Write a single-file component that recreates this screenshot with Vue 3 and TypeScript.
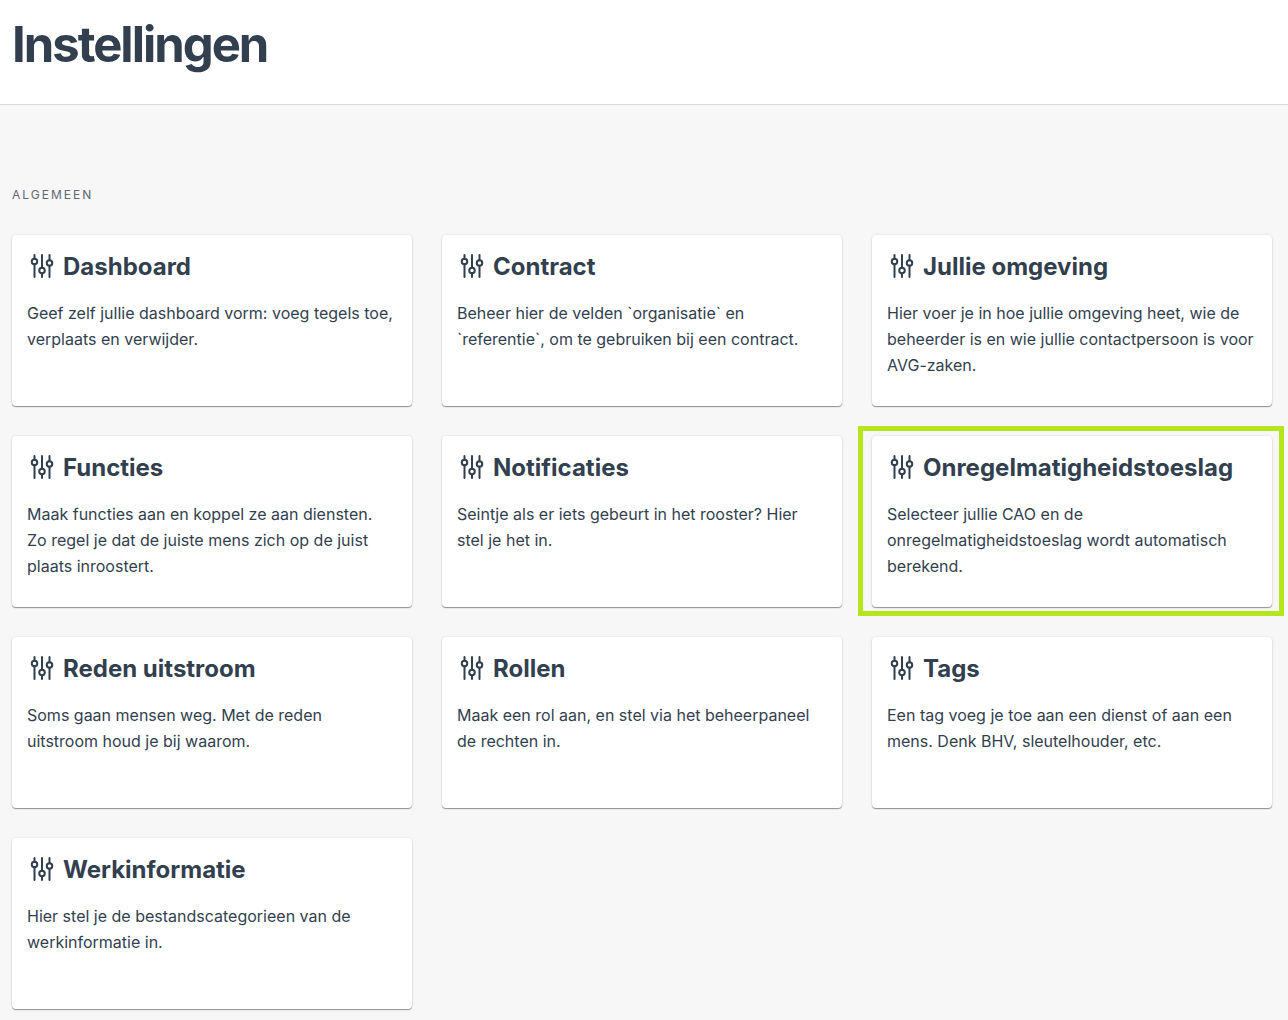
<script setup lang="ts">
interface SettingCard {
  title: string
  slug: string
  text: string
  highlighted?: boolean
}

const cards: SettingCard[] = [
  { title: 'Dashboard', slug: 'dashboard', text: 'Geef zelf jullie dashboard vorm: voeg tegels toe, verplaats en verwijder.' },
  { title: 'Contract', slug: 'contract', text: 'Beheer hier de velden `organisatie` en `referentie`, om te gebruiken bij een contract.' },
  { title: 'Jullie omgeving', slug: 'omgeving', text: 'Hier voer je in hoe jullie omgeving heet, wie de beheerder is en wie jullie contactpersoon is voor AVG-zaken.' },
  { title: 'Functies', slug: 'functies', text: 'Maak functies aan en koppel ze aan diensten. Zo regel je dat de juiste mens zich op de juist plaats inroostert.' },
  { title: 'Notificaties', slug: 'notificaties', text: 'Seintje als er iets gebeurt in het rooster? Hier stel je het in.' },
  { title: 'Onregelmatigheidstoeslag', slug: 'toeslag', text: 'Selecteer jullie CAO en de onregelmatigheidstoeslag wordt automatisch berekend.', highlighted: true },
  { title: 'Reden uitstroom', slug: 'uitstroom', text: 'Soms gaan mensen weg. Met de reden uitstroom houd je bij waarom.' },
  { title: 'Rollen', slug: 'rollen', text: 'Maak een rol aan, en stel via het beheerpaneel de rechten in.' },
  { title: 'Tags', slug: 'tags', text: 'Een tag voeg je toe aan een dienst of aan een mens. Denk BHV, sleutelhouder, etc.' },
  { title: 'Werkinformatie', slug: 'werkinformatie', text: 'Hier stel je de bestandscategorieen van de werkinformatie in.' },
]
</script>

<template>
  <div class="page">
    <header class="page-header">
      <h1>Instellingen</h1>
    </header>
    <main class="content">
      <h2 class="section-title">Algemeen</h2>
      <div class="grid">
        <a
          v-for="card in cards"
          :key="card.slug"
          class="card"
          :class="{ highlighted: card.highlighted }"
          :href="`#${card.slug}`"
        >
          <h3 class="card-title">
            <svg class="icon" viewBox="0 0 24 24" aria-hidden="true">
              <path d="M4.500 1v3.750M4.500 10.250v12.750M12 1v12.750M12 19.250v3.750M19.500 1v5.250M19.500 11.750v11.250" />
              <circle cx="4.500" cy="7.500" r="2.750" />
              <circle cx="12" cy="16.500" r="2.750" />
              <circle cx="19.500" cy="9" r="2.750" />
            </svg>
            <span>{{ card.title }}</span>
          </h3>
          <p class="card-text">{{ card.text }}</p>
        </a>
      </div>
    </main>
  </div>
</template>

<style>
body {
  margin: 0;
  background: #f7f7f7;
}
</style>

<style scoped>
.page {
  min-height: 100vh;
  color: #323f4f;
  font-family: Inter, "Liberation Sans", sans-serif;
}

.page-header {
  padding: 15px 12px 29px;
  background: #fff;
  border-bottom: 1px solid #d8d8d8;
}

h1 {
  margin: 0;
  font-size: 49px;
  line-height: 60px;
  font-weight: 700;
  letter-spacing: -2px;
}

.content {
  padding: 80px 16px 10px 12px;
}

.section-title {
  margin: 0 0 30px;
  font-size: 12px;
  line-height: 20px;
  font-weight: 400;
  letter-spacing: 2px;
  text-transform: uppercase;
  color: #5f6670;
}

.grid {
  display: grid;
  grid-template-columns: repeat(3, minmax(0, 1fr));
  gap: 30px;
}

.card {
  position: relative;
  box-sizing: border-box;
  min-height: 171px;
  padding: 15px 18px 15px 15px;
  border-radius: 4px;
  background: #fff;
  box-shadow: 0 1px 1px rgba(0, 0, 0, 0.4), 0 0 3px rgba(0, 0, 0, 0.1);
  color: inherit;
  text-decoration: none;
}

.card.highlighted::after {
  content: "";
  position: absolute;
  inset: -10px -12px -9px -14px;
  border: 5px solid #b4e61d;
  pointer-events: none;
}

.card-title {
  display: flex;
  align-items: center;
  gap: 9px;
  margin: 0 0 16px;
  padding-left: 3px;
  font-size: 24px;
  line-height: 34px;
  font-weight: 700;
}

.icon {
  flex: none;
  width: 24px;
  height: 24px;
  margin-bottom: 2px;
  fill: none;
  stroke: currentColor;
  stroke-width: 2;
  stroke-linecap: round;
}

.card-text {
  margin: 0;
  font-size: 16px;
  line-height: 26px;
}
</style>
